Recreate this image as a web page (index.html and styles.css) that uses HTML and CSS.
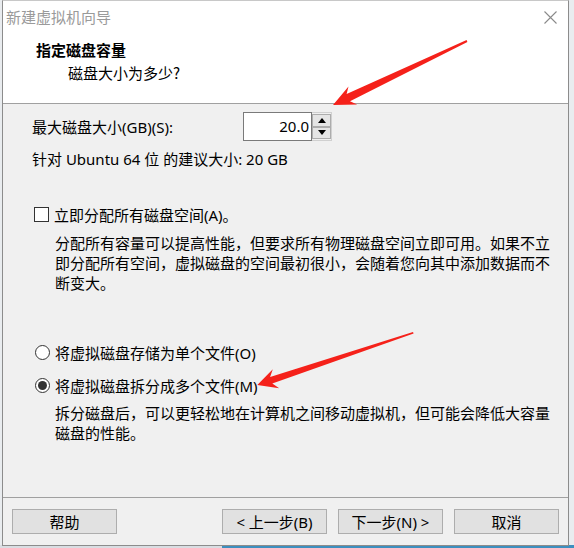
FILE: index.html
```html
<!DOCTYPE html>
<html lang="zh-CN">
<head>
<meta charset="utf-8">
<title>新建虚拟机向导</title>
<link rel="stylesheet" href="styles.css">
</head>
<body>
<div class="desktop">
  <div class="window">
    <div class="titlebar">
      <span class="title">新建虚拟机向导</span>
      <svg class="close" width="13" height="13" viewBox="0 0 13 13"><path d="M0.5 0.5 L12.5 12.5 M12.5 0.5 L0.5 12.5" stroke="#8a8a8a" stroke-width="1.1" fill="none"/></svg>
    </div>
    <div class="header">
      <div class="h-title">指定磁盘容量</div>
      <div class="h-sub">磁盘大小为多少?</div>
    </div>
    <div class="content">
      <div class="size-row">
        <span class="size-label">最大磁盘大小(GB)(S):</span>
        <div class="spin">
          <div class="spin-input">20.0</div>
          <div class="spin-btns">
            <div class="spin-btn"><svg width="8" height="5" viewBox="0 0 8 5"><polygon points="4,0 8,5 0,5" fill="#000"/></svg></div>
            <div class="spin-btn"><svg width="8" height="5" viewBox="0 0 8 5"><polygon points="0,0 8,0 4,5" fill="#000"/></svg></div>
          </div>
        </div>
      </div>
      <div class="hint">针对 Ubuntu 64 位 的建议大小: 20 GB</div>
      <div class="check-row"><span class="checkbox"></span><span>立即分配所有磁盘空间(A)。</span></div>
      <p class="desc desc-alloc">分配所有容量可以提高性能，但要求所有物理磁盘空间立即可用。如果不立<br>即分配所有空间，虚拟磁盘的空间最初很小，会随着您向其中添加数据而不<br>断变大。</p>
      <div class="radio-row radio-first"><span class="radio"></span><span>将虚拟磁盘存储为单个文件(O)</span></div>
      <div class="radio-row radio-second"><span class="radio checked"></span><span>将虚拟磁盘拆分成多个文件(M)</span></div>
      <p class="desc desc-split">拆分磁盘后，可以更轻松地在计算机之间移动虚拟机，但可能会降低大容量<br>磁盘的性能。</p>
    </div>
    <div class="footer">
      <button class="btn">帮助</button>
      <div class="spacer"></div>
      <button class="btn">&lt; 上一步(B)</button>
      <button class="btn">下一步(N) &gt;</button>
      <button class="btn">取消</button>
    </div>
  </div>
  <svg class="arrows" width="574" height="548" viewBox="0 0 574 548">
    <polygon fill="#f5211a" points="333,105 357.1,104.5 350.0,101.3 467.4,41.9 466.6,40.1 346.6,94.1 348.5,86.5"/>
    <polygon fill="#f5211a" points="257.3,385 279.2,388.2 272.3,383.6 413.6,333.5 413.0,331.9 270.1,377.0 272.8,369.2"/>
  </svg>
</div>
</body>
</html>
```
FILE: styles.css
```css
* { box-sizing: border-box; }
html, body { margin: 0; padding: 0; }
body {
  width: 574px;
  height: 548px;
  overflow: hidden;
  font-family: "Noto Sans", "Noto Sans CJK SC", sans-serif;
  font-size: 15px;
  color: #000;
}
.desktop {
  position: relative;
  width: 574px;
  height: 548px;
  background:
    linear-gradient(to right, #d9dde2 0 222px, #3d8fbf 222px) left bottom / 100% 3px no-repeat,
    #e9ecef;
}
.window {
  margin-left: 2px;
  width: 567px;
  height: 546px;
  border: 1px solid #8c8c8c;
  border-top-color: #c8c8c8;
  background: #f0f0f0;
  display: flex;
  flex-direction: column;
}
.titlebar {
  height: 33px;
  background: #fff;
  display: flex;
  align-items: center;
  justify-content: space-between;
  padding: 0 11px 1px 3px;
}
.title {
  color: #9a9a9a;
  font-family: "Noto Sans CJK SC", sans-serif;
  font-size: 15px;
  line-height: 20px;
}
.close { display: block; }
.header {
  background: #fff;
  height: 70px;
  border-bottom: 1px solid #a0a0a0;
  padding: 6px 0 0 33px;
  font-family: "Noto Sans CJK SC", sans-serif;
}
.h-title {
  font-weight: bold;
  line-height: 20px;
}
.h-sub {
  margin-top: 3px;
  margin-left: 32px;
  line-height: 20px;
}
.content {
  flex: 1;
  padding: 8px 0 0 29px;
}
.size-row {
  display: flex;
  align-items: center;
  height: 29px;
}
.size-label {
  width: 211px;
  line-height: 20px;
}
.spin {
  display: flex;
  height: 29px;
}
.spin-input {
  width: 69px;
  height: 29px;
  border: 1px solid #7a7a7a;
  background: #fff;
  text-align: right;
  padding-right: 2px;
  line-height: 27px;
  font-size: 15px;
}
.spin-btns {
  width: 20px;
  height: 29px;
  display: flex;
  flex-direction: column;
  justify-content: space-between;
  padding: 1px 0;
  border: 1px solid #d0d0d0;
  border-left: none;
}
.spin-btn {
  height: 13px;
  border: 1px solid #adadad;
  background: #e5e5e5;
  display: flex;
  align-items: center;
  justify-content: center;
}
.spin-btn svg { display: block; }
.hint {
  margin-top: 8px;
  line-height: 20px;
}
.check-row {
  margin-top: 35px;
  display: flex;
  align-items: center;
  height: 20px;
  gap: 5px;
}
.checkbox {
  width: 15px;
  height: 15px;
  border: 1px solid #333;
  background: #fff;
  margin-left: 2px;
}
.desc {
  margin: 9px 0 0 23px;
  line-height: 20px;
  white-space: nowrap;
}
.radio-row {
  display: flex;
  align-items: center;
  height: 20px;
  gap: 5px;
}
.radio-first { margin-top: 49px; }
.radio-second { margin-top: 13px; }
.radio {
  width: 15px;
  height: 15px;
  border: 1px solid #333;
  border-radius: 50%;
  background: #fff;
  margin-left: 3px;
  display: flex;
  align-items: center;
  justify-content: center;
}
.radio.checked::after {
  content: "";
  width: 9px;
  height: 9px;
  border-radius: 50%;
  background: #333;
}
.desc-split { margin-top: 8px; }
.footer {
  border-top: 1px solid #a0a0a0;
  display: flex;
  align-items: flex-start;
  gap: 11px;
  padding: 11px 9px 0 9px;
  height: 48px;
}
.spacer { flex: 1; }
.btn {
  width: 105px;
  height: 25px;
  border: 1px solid #adadad;
  background: #e1e1e1;
  font-family: "Noto Sans", "Noto Sans CJK SC", sans-serif;
  font-size: 15px;
  color: #000;
  padding: 0;
  line-height: 22px;
}
.arrows {
  position: absolute;
  top: 0;
  left: 0;
  pointer-events: none;
}
```
